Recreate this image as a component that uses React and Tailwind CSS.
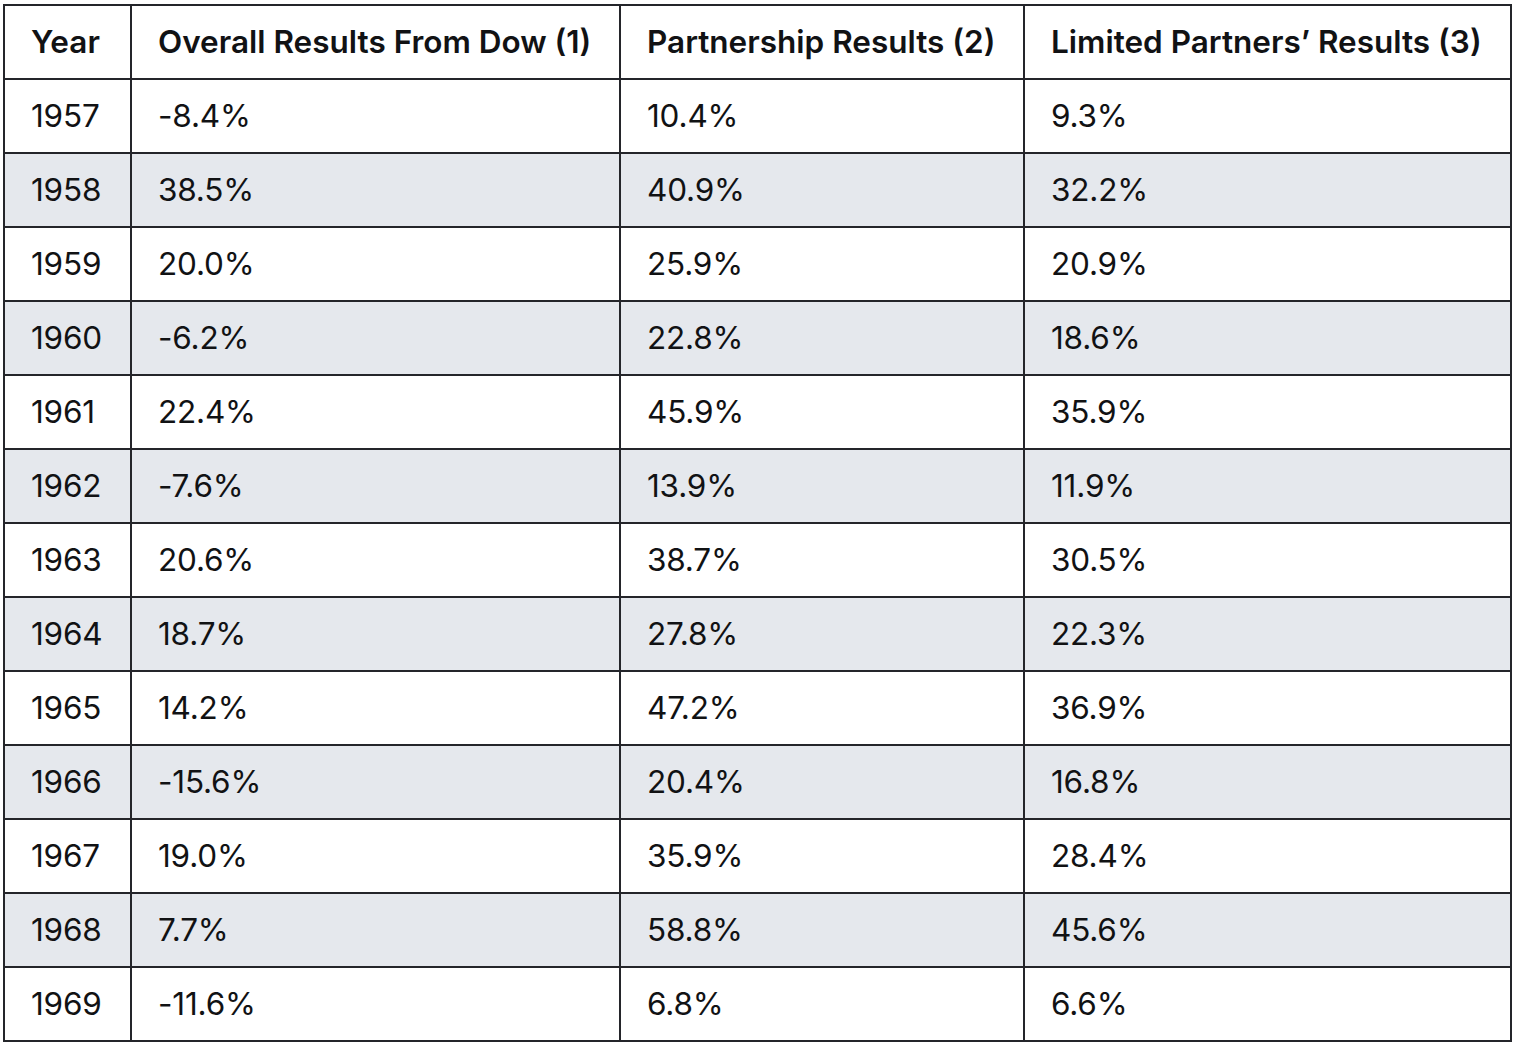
import React from "react";

const rows = [
  ["1957", "-8.4%", "10.4%", "9.3%"],
  ["1958", "38.5%", "40.9%", "32.2%"],
  ["1959", "20.0%", "25.9%", "20.9%"],
  ["1960", "-6.2%", "22.8%", "18.6%"],
  ["1961", "22.4%", "45.9%", "35.9%"],
  ["1962", "-7.6%", "13.9%", "11.9%"],
  ["1963", "20.6%", "38.7%", "30.5%"],
  ["1964", "18.7%", "27.8%", "22.3%"],
  ["1965", "14.2%", "47.2%", "36.9%"],
  ["1966", "-15.6%", "20.4%", "16.8%"],
  ["1967", "19.0%", "35.9%", "28.4%"],
  ["1968", "7.7%", "58.8%", "45.6%"],
  ["1969", "-11.6%", "6.8%", "6.6%"],
];

const headers = [
  "Year",
  "Overall Results From Dow (1)",
  "Partnership Results (2)",
  "Limited Partners\u2019 Results (3)",
];

export default function App() {
  return (
    <div className="bg-white min-h-screen pl-[3px] pt-[4px] font-['Inter','Liberation_Sans',sans-serif] text-[#111214]">
      <div className="grid w-[1509px] grid-cols-[127px_489px_404px_487px] border-l-2 border-t-2 border-[#24252a]">
        {headers.map((h) => (
          <div
            key={h}
            className="flex h-[74px] items-center whitespace-nowrap border-b-2 border-r-2 border-[#24252a] pl-[26px] text-[31.5px] font-semibold"
          >
            {h}
          </div>
        ))}
        {rows.map((r, ri) =>
          r.map((c, ci) => (
            <div
              key={ri + "-" + ci}
              className={
                "flex h-[74px] items-center border-b-2 border-r-2 border-[#24252a] pl-[26px] text-[31.5px] tracking-[-0.006em] " +
                (ri % 2 === 1 ? "bg-[#e5e8ed]" : "bg-white")
              }
            >
              {c}
            </div>
          ))
        )}
      </div>
    </div>
  );
}
